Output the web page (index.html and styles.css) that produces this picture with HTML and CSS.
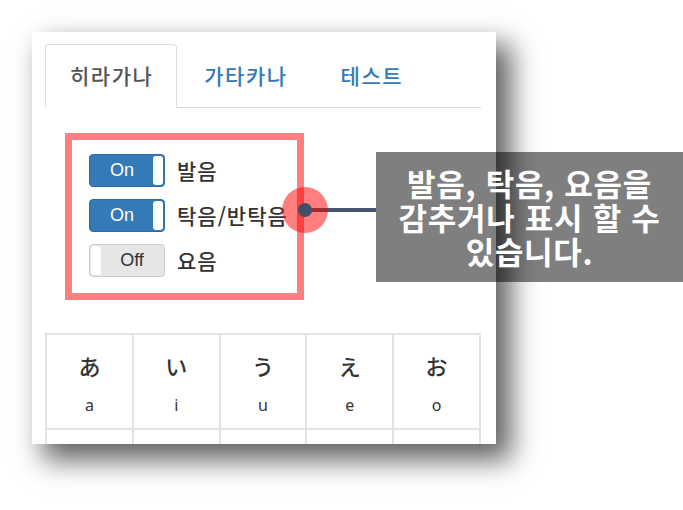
FILE: index.html
```html
<!DOCTYPE html>
<html lang="ko">
<head>
<meta charset="utf-8">
<title>히라가나</title>
<link rel="stylesheet" href="styles.css">
</head>
<body>
<div class="stage">
  <div class="card">
    <ul class="tabs">
      <li class="tab active">히라가나</li>
      <li class="tab">가타카나</li>
      <li class="tab">테스트</li>
    </ul>
    <div class="options">
      <div class="opt"><span class="switch on"><span class="sw-label">On</span><span class="sw-handle"></span></span><span class="opt-text">발음</span></div>
      <div class="opt"><span class="switch on"><span class="sw-label">On</span><span class="sw-handle"></span></span><span class="opt-text">탁음/반탁음</span></div>
      <div class="opt"><span class="switch off"><span class="sw-handle"></span><span class="sw-label">Off</span></span><span class="opt-text">요음</span></div>
    </div>
    <table class="kana">
      <tr>
        <td><div class="k">あ</div><div class="r">a</div></td>
        <td><div class="k">い</div><div class="r">i</div></td>
        <td><div class="k">う</div><div class="r">u</div></td>
        <td><div class="k">え</div><div class="r">e</div></td>
        <td><div class="k">お</div><div class="r">o</div></td>
      </tr>
      <tr>
        <td></td>
        <td></td>
        <td></td>
        <td></td>
        <td></td>
      </tr>
    </table>
  </div>
  <div class="pointer-line"></div>
  <div class="pointer-circle"></div>
  <div class="pointer-dot"></div>
  <div class="callout">발음, 탁음, 요음을<br>감추거나 표시 할 수<br>있습니다.</div>
</div>
</body>
</html>
```
FILE: styles.css
```css
html, body {
  margin: 0;
  padding: 0;
  background: #fff;
}
.stage {
  position: relative;
  width: 683px;
  height: 510px;
  overflow: hidden;
  padding: 32px 0 0 32px;
  box-sizing: border-box;
  font-family: "Noto Sans CJK KR", "Noto Sans", sans-serif;
}
.card {
  width: 464px;
  height: 412px;
  box-sizing: border-box;
  padding: 12px 15px 0 13px;
  background: #fff;
  overflow: hidden;
  box-shadow: 13px 14px 26px 2px rgba(0,0,0,0.62);
}
.tabs {
  list-style: none;
  margin: 0;
  padding: 0;
  display: flex;
  border-bottom: 1px solid #ddd;
}
.tab {
  height: 64px;
  box-sizing: border-box;
  padding: 0 25px 2px 26px;
  display: flex;
  align-items: center;
  font-size: 21px;
  font-weight: 500;
  letter-spacing: 1.5px;
  color: #337ab7;
  border: 1px solid transparent;
  border-radius: 4px 4px 0 0;
  margin-bottom: -1px;
}
.tab.active {
  padding: 0 23px 2px 24px;
  color: #555;
  border-color: #ddd;
  border-bottom-color: #fff;
  background: #fff;
}
.options {
  margin: 25px 0 0 20px;
  width: 239px;
  height: 167px;
  box-sizing: border-box;
  border: 7px solid rgba(255,0,0,0.5);
  padding: 14px 17px 0;
  display: flex;
  flex-direction: column;
  gap: 12px;
}
.opt {
  display: flex;
  align-items: center;
  gap: 12px;
}
.switch {
  width: 76px;
  height: 33px;
  flex: none;
  box-sizing: border-box;
  border-radius: 4px;
  display: flex;
  overflow: hidden;
  padding: 1px;
}
.switch.on {
  background: #337ab7;
  border: 1px solid #2e6da4;
}
.switch.off {
  background: #e6e6e6;
  border: 1px solid #ccc;
}
.sw-label {
  flex: 1;
  display: flex;
  align-items: center;
  justify-content: center;
  font-family: "Liberation Sans", Arial, sans-serif;
  font-size: 18px;
}
.switch.on .sw-label { color: #fff; }
.switch.off .sw-label { color: #333; }
.sw-handle {
  width: 10px;
  background: #fff;
  border-radius: 3px;
}
.opt-text {
  font-size: 21px;
  font-weight: 500;
  color: #333;
  letter-spacing: 1px;
  white-space: nowrap;
  margin-top: -2px;
}
.kana {
  margin-top: 33px;
  width: 436px;
  border-collapse: collapse;
  table-layout: fixed;
}
.kana td {
  border: 2px solid #e3e3e3;
  text-align: center;
  height: 93px;
  padding: 0;
  vertical-align: top;
  color: #333;
}
.k {
  font-family: "Noto Sans CJK JP", sans-serif;
  font-size: 22px;
  font-weight: 500;
  line-height: 30px;
  margin-top: 15px;
}
.r {
  font-family: "Noto Sans", sans-serif;
  font-size: 16px;
  line-height: 20px;
  margin-top: 15px;
}
.pointer-line {
  position: absolute;
  left: 305px;
  top: 208px;
  width: 71px;
  height: 4px;
  background: #45556e;
}
.pointer-circle {
  position: absolute;
  left: 282px;
  top: 187px;
  width: 46px;
  height: 46px;
  border-radius: 50%;
  background: rgba(255,0,0,0.5);
}
.pointer-dot {
  position: absolute;
  left: 298px;
  top: 203px;
  width: 14px;
  height: 14px;
  border-radius: 50%;
  background: #3f5068;
}
.callout {
  position: absolute;
  left: 376px;
  top: 152px;
  width: 307px;
  height: 130px;
  box-sizing: border-box;
  padding-top: 14px;
  background: rgba(0,0,0,0.5);
  color: #fff;
  font-size: 31px;
  font-weight: 700;
  line-height: 34px;
  letter-spacing: 0.7px;
  text-align: center;
  white-space: nowrap;
}
```
